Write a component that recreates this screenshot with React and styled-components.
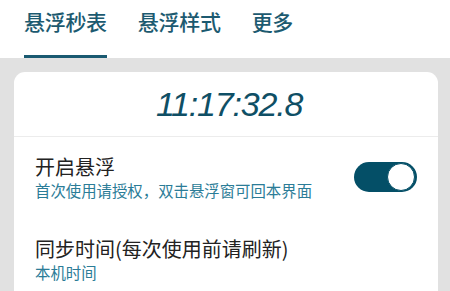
import React, { useState } from 'react'
import styled, { createGlobalStyle } from 'styled-components'

const GlobalStyle = createGlobalStyle`
html, body {
    margin: 0;
    padding: 0;
    background: #e1e1e1;
    font-family: "Noto Sans CJK SC", "Noto Sans", sans-serif;
}
`

const tabs = ['悬浮秒表', '悬浮样式', '更多']

function App() {
    const [active, setActive] = useState(0)
    const [floating, setFloating] = useState(true)

    return (
        <Page>
            <GlobalStyle />
            <TabBar>
                {tabs.map((t, i) => (
                    <Tab key={t} active={i === active} onClick={() => setActive(i)}>
                        {t}
                    </Tab>
                ))}
            </TabBar>
            <Body>
                <Card>
                    <Clock>11:17:32.8</Clock>
                    <Row>
                        <Texts>
                            <Title>开启悬浮</Title>
                            <Sub>首次使用请授权，双击悬浮窗可回本界面</Sub>
                        </Texts>
                        <Toggle on={floating} onClick={() => setFloating(!floating)} />
                    </Row>
                    <Row>
                        <Texts>
                            <Title>同步时间(每次使用前请刷新)</Title>
                            <Sub>本机时间</Sub>
                        </Texts>
                    </Row>
                </Card>
            </Body>
        </Page>
    )
}

export default App

const Page = styled.div`
min-height: 291px;
background: #e1e1e1;
`

const TabBar = styled.div`
height: 58px;
background: white;
display: flex;
align-items: stretch;
gap: 31px;
padding-left: 24px;
box-sizing: border-box;
`

const Tab = styled.div`
font-size: 21px;
font-weight: 500;
color: #1c5a70;
line-height: 1;
padding-top: 11px;
box-sizing: border-box;
letter-spacing: -0.3px;
border-bottom: 3px solid ${p => p.active ? '#1a5a71' : 'transparent'};
cursor: pointer;
`

const Body = styled.div`
padding: 14px 12px 0 14px;
`

const Card = styled.div`
background: white;
border-radius: 11px 11px 0 0;
min-height: 219px;
`

const Clock = styled.div`
height: 65px;
box-sizing: border-box;
padding: 15px 0 0 6px;
border-bottom: 1px solid #ececec;
text-align: center;
font-family: "Liberation Sans", Arial, sans-serif;
font-style: italic;
font-size: 34px;
line-height: 35px;
letter-spacing: -1.2px;
color: #0f4f65;
`

const Row = styled.div`
display: flex;
align-items: center;
justify-content: space-between;
padding: 17px 21px 19px;
`

const Texts = styled.div`
display: flex;
flex-direction: column;
`

const Title = styled.span`
font-size: 20px;
line-height: 26px;
color: #222;
`

const Sub = styled.span`
font-size: 15.4px;
line-height: 20px;
color: #2b7c97;
`

const Toggle = styled.button`
position: relative;
width: 63px;
height: 30px;
border-radius: 15px;
border: none;
padding: 0;
background: ${p => p.on ? '#044f67' : '#bbb'};
cursor: pointer;
&::after {
    content: '';
    position: absolute;
    top: 1px;
    left: ${p => p.on ? '33px' : '1px'};
    width: 26px;
    height: 26px;
    border-radius: 50%;
    background: white;
    border: 1px solid ${p => p.on ? '#044f67' : '#bbb'};
}
`
